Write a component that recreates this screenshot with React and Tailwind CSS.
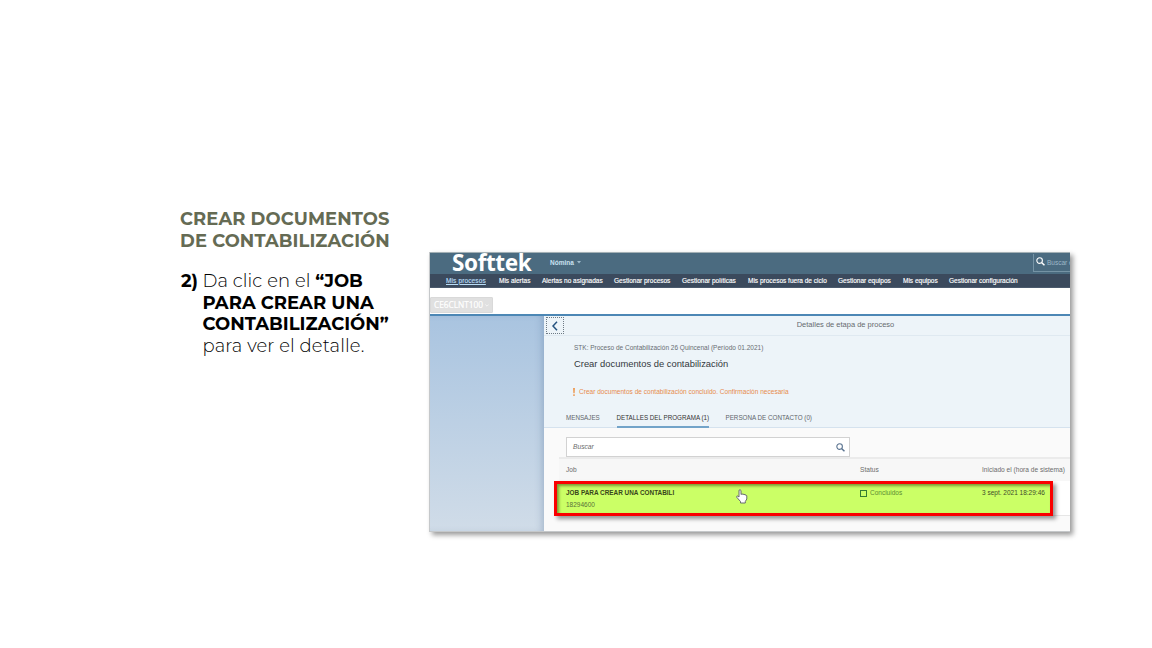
const NAV = [
  { label: 'Mis procesos', cls: 'w-[53px] underline text-[#b9dcf5] tracking-[0.13px]' },
  { label: 'Mis alertas', cls: 'w-[43px] text-white' },
  { label: 'Alertas no asignadas', cls: 'w-[72px] text-white' },
  { label: 'Gestionar procesos', cls: 'w-[68px] text-white' },
  { label: 'Gestionar políticas', cls: 'w-[66px] text-white' },
  { label: 'Mis procesos fuera de ciclo', cls: 'w-[90px] text-white' },
  { label: 'Gestionar equipos', cls: 'w-[65px] text-white' },
  { label: 'Mis equipos', cls: 'w-[46px] text-white' },
  { label: 'Gestionar configuración', cls: 'w-[80px] text-white' },
];

function SearchIcon({ className }) {
  return (
    <svg viewBox="0 0 10 10" className={className} fill="none" stroke="currentColor">
      <circle cx="4" cy="4" r="3.1" strokeWidth="1.2" />
      <path d="M6.4 6.4 9.4 9.200" strokeWidth="1.7" />
    </svg>
  );
}

function Instructions() {
  return (
    <section className="w-[249px] shrink-0 pt-[208px] font-['Montserrat','Inter',sans-serif]">
      <h1 className="whitespace-nowrap text-[17.900px] font-bold leading-[22px] tracking-[0.1px] text-[#656b54]">
        <span className="block">CREAR DOCUMENTOS</span>
        <span className="block">DE CONTABILIZACIÓN</span>
      </h1>
      <div className="mt-[19px] flex whitespace-nowrap text-[18px] leading-[21.7px] text-black">
        <b className="w-[22.500px] shrink-0 pl-px">2)</b>
        <p className="font-light">
          <span className="block tracking-[0.1px]">Da clic en el <b className="font-bold tracking-normal">“JOB</b></span>
          <b className="block font-bold">PARA CREAR UNA</b>
          <b className="block font-bold">CONTABILIZACIÓN”</b>
          <span className="block tracking-[0.1px]">para ver el detalle.</span>
        </p>
      </div>
    </section>
  );
}

function TopBars() {
  return (
    <header>
      <div className="flex h-[22px] items-start border-t border-[#a3b0b5] bg-[#4b6b80]">
        <div className="ml-[22px] w-[98px] font-['Noto_Sans',sans-serif] text-[22.500px] font-bold leading-[20px] tracking-[-0.4px] text-white">Softtek</div>
        <div className="flex items-center pt-[5px] text-[6.5px] font-bold leading-[9px] text-[#c9e2f1]">
          Nómina
          <svg viewBox="0 0 5 3" className="ml-[3px] h-[2.5px] w-[4px]"><path d="M0 0h5L2.5 3z" fill="#9fbccd" /></svg>
        </div>
        <div className="ml-auto mt-px flex h-[18px] w-[37px] items-start overflow-hidden whitespace-nowrap border-b border-l border-[#7593a5] pl-[2px] pt-[3px] text-[6.5px] leading-[11px] text-[#9db8c8]">
          <SearchIcon className="mr-[2px] h-[9px] w-[9px] shrink-0 text-white" />
          Buscar en
        </div>
      </div>
      <nav className="flex h-[14px] items-center whitespace-nowrap border-b border-[#4b5a6d] bg-[#3b4a5d] pl-[16px] text-[6.5px] leading-[14px] [-webkit-text-stroke:0.15px_currentColor]">
        {NAV.map((n) => <a key={n.label} className={'shrink-0 ' + n.cls}>{n.label}</a>)}
      </nav>
      <div className="flex h-[26px] items-end bg-white">
        <div className="mb-px flex h-[16px] w-[63px] items-center justify-center rounded-[1px] border border-[#d9d9d9] bg-[#e0e0e0] font-['Open_Sans',sans-serif] text-[8.300px] leading-[14px] text-white [-webkit-text-stroke:0.2px_white]">
          CE6CLNT100
          <svg viewBox="0 0 6 4" className="ml-[2px] h-[3px] w-[4px]" fill="none" stroke="white"><path d="M.5.5 3 3 5.500.5" /></svg>
        </div>
      </div>
    </header>
  );
}

function DetailHeader() {
  return (
    <div className="h-[112px] border-b border-[#d5e2ee] bg-[#edf4f9]">
      <div className="flex h-[20px] border-b border-[#dfe9f1]">
        <div className="ml-[2px] mt-px flex h-[17px] w-[18px] shrink-0 items-center justify-center border border-dotted border-[#6e7a85]">
          <svg viewBox="0 0 6 10" className="h-[10px] w-[6px]" fill="none" stroke="#24527f" strokeWidth="1.5"><path d="M5 .8 1 5l4 4.200" /></svg>
        </div>
        <span className="w-[506px] pl-[57px] pt-[4px] text-center text-[7.5px] leading-[10px] text-[#666b70]">Detalles de etapa de proceso</span>
      </div>
      <div className="whitespace-nowrap pl-[30px]">
        <p className="pt-[7px] text-[6.500px] leading-[9px] text-[#686d73]">STK: Proceso de Contabilización 26 Quincenal (Período 01.2021)</p>
        <h2 className="mt-[6px] text-[9.4px] leading-[12px] text-[#33383d]">Crear documentos de contabilización</h2>
        <p className="mt-[17px] flex items-center text-[6.560px] leading-[10px] text-[#e78c4d]">
          <svg viewBox="0 0 2 8" className="mr-[4px] ml-[-1px] h-[8px] w-[2px]" fill="#eda05e"><path d="M0 0h2l-.3 5.300H.3zM.2 6.300h1.600V8H.2z" /></svg>
          Crear documentos de contabilización concluido. Confirmación necesaria
        </p>
      </div>
      <div className="mt-[14px] flex whitespace-nowrap pl-[22px] text-[6.280px] leading-[14px] text-[#5f656b]">
        <span className="w-[50.500px]">MENSAJES</span>
        <span className="mr-[17px] h-[17px] w-[92px] border-b-2 border-[#73a4c9] text-[#333]">DETALLES DEL PROGRAMA (1)</span>
        <span>PERSONA DE CONTACTO (0)</span>
      </div>
    </div>
  );
}

function JobTable() {
  return (
    <div className="flex-1 bg-[#fafafa] pt-[9px]">
      <div className="ml-[22px] flex h-[20px] w-[284px] items-center justify-between border border-[#d2d2d2] bg-white pl-[6px] pr-[4px] text-[6.7px] italic text-[#6a6a6a]">
        Buscar
        <SearchIcon className="h-[9px] w-[9px] text-[#5a7390]" />
      </div>
      <div className="relative ml-[15px] border-t-2 border-[#ebebeb] whitespace-nowrap">
        <div className="flex h-[22px] items-center bg-[#f7f7f7] pl-[7px] text-[6.600px] text-[#6c6c6c]">
          <span className="w-[294px]">Job</span>
          <span className="w-[122px]">Status</span>
          <span>Iniciado el (hora de sistema)</span>
        </div>
        <div className="flex h-[35px] border-b border-[#e6e6e6] bg-white" />
        <div className="absolute -left-[5px] top-[22px] flex h-[35px] w-[499px] border-[3px] border-[#fa0000] bg-[#cbff66] pl-[9px] pt-[4px] text-[6.500px] leading-[10px] shadow-[3px_3px_4px_rgba(0,0,0,0.4),inset_2px_2px_3px_rgba(70,90,20,0.6)]">
          <div className="w-[170px] text-[#424b2b]">
            <b className="block text-[6.400px] text-[#39451b]">JOB PARA CREAR UNA CONTABILI</b>
            <span className="block pt-[2px] text-[#59703a]">18294600</span>
          </div>
          <svg viewBox="0 0 12 15" className="mt-[1px] h-[15px] w-[12px]" fill="white" stroke="#666b6e" strokeWidth="1">
            <path d="M3 1.200q1.200-1 2 .3v4l1-.8 1 .8 1-.4 1 .9 1-.1.8.9v3.200l-1.500 2.500v1.500H4.500V12.500L.7 8.200q-.2-1.500 1-1.200L3 8z" />
          </svg>
          <div className="ml-[112px] flex h-[10px] w-[122px] items-center text-[#5c8d33]">
            <span className="mr-[3px] h-[7px] w-[7px] border border-[#347d32]" />
            Concluidos
          </div>
          <span className="text-[#424b2b]">3 sept. 2021 18:29:46</span>
        </div>
      </div>
    </div>
  );
}

export default function App() {
  return (
    <main className="flex h-[648px] w-[1152px] overflow-hidden bg-white pl-[180px]">
      <Instructions />
      <section className="mt-[252px] flex h-[280px] w-[641px] flex-col border-b border-l border-[#c5c8ca] font-['Liberation_Sans',sans-serif] shadow-[3px_3px_5px_rgba(0,0,0,0.4)]">
        <TopBars />
        <div className="flex min-h-0 flex-1 border-t-2 border-[#4c87b5]">
          <aside className="w-[114px] shrink-0 bg-linear-to-b from-[#a9c4e0] to-[#d0dce8] shadow-[inset_-5px_0_7px_-3px_rgba(70,100,140,0.3)]" />
          <div className="flex min-w-0 flex-1 flex-col">
            <DetailHeader />
            <JobTable />
          </div>
        </div>
      </section>
    </main>
  );
}
